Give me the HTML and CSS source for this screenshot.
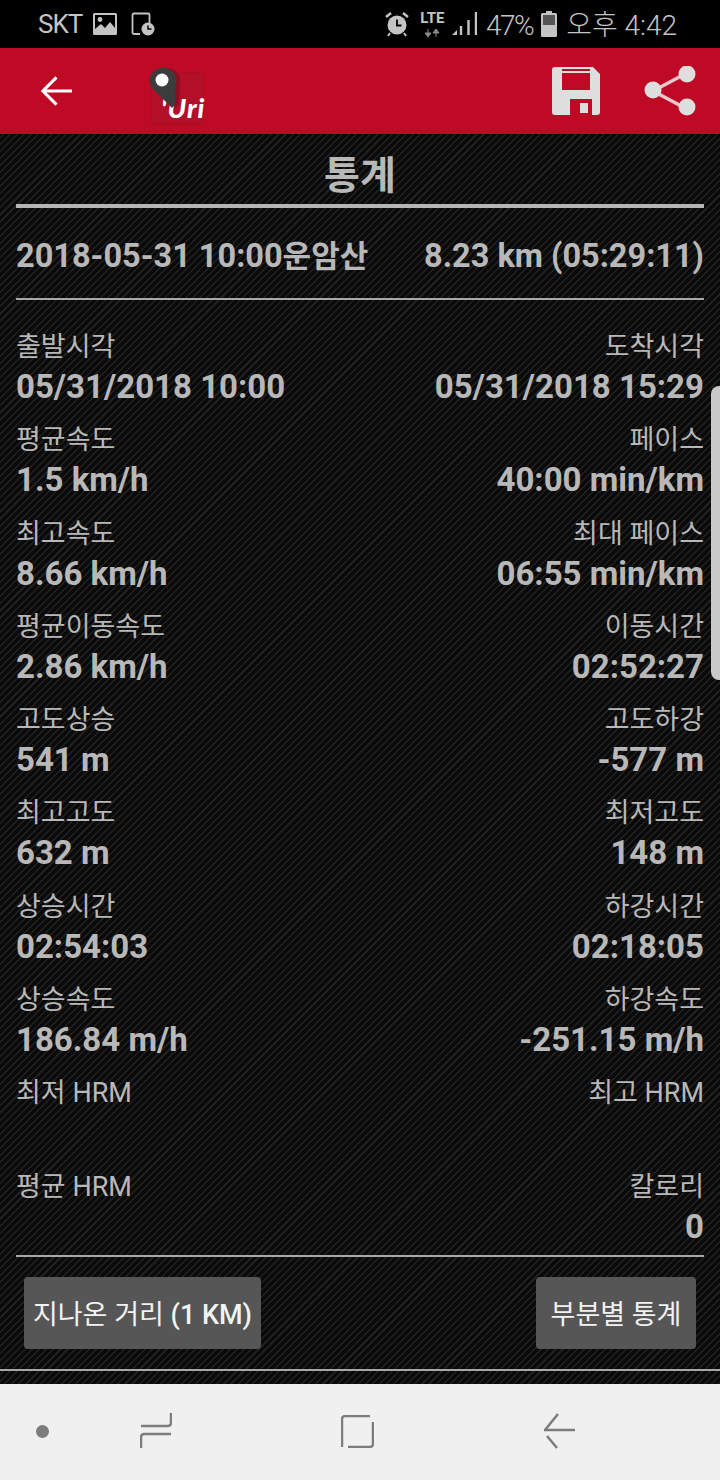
FILE: index.html
```html
<!DOCTYPE html>
<html lang="ko">
<head>
  <meta charset="UTF-8" />
  <title>통계</title>
  <link rel="stylesheet" href="styles.css">
</head>
<body>
  <div class="status-bar">
    <div class="status-left">
      <span class="st-text">SKT</span>
      <svg width="24" height="22" viewBox="0 0 24 22"><rect x="0" y="0" width="24" height="22" rx="1.500" fill="#c4c4c4"/><rect x="2" y="2" width="20" height="18" fill="#000"/><circle cx="7" cy="6.500" r="2.400" fill="#c4c4c4"/><path d="M2 20v-4l6-5 4 4 5-6 5 6v5z" fill="#c4c4c4"/></svg>
      <svg class="st-clock" width="24" height="24" viewBox="0 0 24 24"><path d="M9 22H3a1.500 1.500 0 0 1-1.500-1.500V3A1.500 1.500 0 0 1 3 1.500h14A1.500 1.500 0 0 1 18.500 3v8" fill="none" stroke="#c4c4c4" stroke-width="1.800"/><circle cx="17" cy="17" r="6.500" fill="#c4c4c4"/><path d="M17 13.500V17h3.500" fill="none" stroke="#000" stroke-width="1.500"/></svg>
    </div>
    <div class="status-right">
      <svg width="24" height="26" viewBox="0 0 24 26"><circle cx="12" cy="14" r="9.500" fill="#c4c4c4"/><path d="M12 8.500V14.500H16.500" fill="none" stroke="#000" stroke-width="1.800"/><path d="M1 6l5-4M23 6l-5-4" stroke="#c4c4c4" stroke-width="2.500"/><path d="M5 22l-2 3M19 22l2 3" stroke="#c4c4c4" stroke-width="2"/></svg>
      <div class="lte">
        <span>LTE</span>
        <svg width="16" height="8" viewBox="0 0 16 8"><path d="M4 0v4M1 4h6L4 8zM12 8V4M9 4h6l-3-4z" fill="#8a8a8a" stroke="#8a8a8a"/></svg>
      </div>
      <svg class="st-signal" width="25" height="24" viewBox="0 0 25 24"><path d="M0 23l5-5v5z" fill="#c4c4c4"/><path d="M9 23v-9M16.500 23V8M24 23V0" stroke="#c4c4c4" stroke-width="2.400" fill="none"/></svg>
      <span class="st-text st-pct">47%</span>
      <svg class="st-batt" width="16" height="26" viewBox="0 0 16 26"><path d="M5 0h6v2h3.500A1.500 1.500 0 0 1 16 3.500v21a1.500 1.500 0 0 1-1.500 1.500h-13A1.500 1.500 0 0 1 0 24.500v-21A1.500 1.500 0 0 1 1.500 2H5z" fill="#c4c4c4"/><rect x="2" y="4" width="12" height="10" fill="#555"/></svg>
      <span class="st-text st-time">오후 4:42</span>
    </div>
  </div>

  <header class="app-bar">
    <svg class="ic-back" width="32" height="32" viewBox="0 0 33 32"><path d="M33 16H3M17 2L3 16l14 14" fill="none" stroke="#fff" stroke-width="3.200"/></svg>
    <div class="logo">
      <div class="logo-box"><span class="logo-text">'Uri</span></div>
      <svg class="logo-pin" width="42" height="44" viewBox="0 0 42 44"><path d="M7 20C2 9 10 1 19 1c9 0 15 7 13 16l-1 20-3 4z" fill="#7a0a1a" opacity=".6"/><path d="M3 20C-2 9 6 1 15 1c9 0 15 7 13 16l-1 20-3 4z" fill="#3c3c3c"/><circle cx="14" cy="13" r="6.500" fill="#fff"/></svg>
    </div>
    <div class="app-actions">
      <svg width="48" height="48" viewBox="0 0 48 48"><path d="M3 0h38l7 7v38a3 3 0 0 1-3 3H3a3 3 0 0 1-3-3V3a3 3 0 0 1 3-3zM10 2v21h28V2zM18 32v16h22V32z" fill="#dedede" fill-rule="evenodd"/><path d="M10 4h28v2H10zM28 36h8v10h-8z" fill="#dedede"/></svg>
      <svg width="54" height="50" viewBox="0 0 54 50"><path d="M10 25L42 8M10 25l32 17" stroke="#e8c8cc" stroke-width="3.500"/><circle cx="10" cy="24" r="8.500" fill="#dedede"/><circle cx="44" cy="8" r="8.500" fill="#dedede"/><circle cx="44" cy="41" r="8.500" fill="#dedede"/></svg>
    </div>
  </header>

  <main class="content">
    <h1 class="title">통계</h1>
    <div class="summary">
      <span>2018-05-31 10:00<span class="place">운암산</span></span>
      <span>8.23 km (05:29:11)</span>
    </div>
    <div class="stats">
      <div class="stat"><span class="label">출발시각</span><span class="value">05/31/2018 10:00</span></div>
      <div class="stat right"><span class="label">도착시각</span><span class="value">05/31/2018 15:29</span></div>
      <div class="stat"><span class="label">평균속도</span><span class="value">1.5 km/h</span></div>
      <div class="stat right"><span class="label">페이스</span><span class="value">40:00 min/km</span></div>
      <div class="stat"><span class="label">최고속도</span><span class="value">8.66 km/h</span></div>
      <div class="stat right"><span class="label">최대 페이스</span><span class="value">06:55 min/km</span></div>
      <div class="stat"><span class="label">평균이동속도</span><span class="value">2.86 km/h</span></div>
      <div class="stat right"><span class="label">이동시간</span><span class="value">02:52:27</span></div>
      <div class="stat"><span class="label">고도상승</span><span class="value">541 m</span></div>
      <div class="stat right"><span class="label">고도하강</span><span class="value">-577 m</span></div>
      <div class="stat"><span class="label">최고고도</span><span class="value">632 m</span></div>
      <div class="stat right"><span class="label">최저고도</span><span class="value">148 m</span></div>
      <div class="stat"><span class="label">상승시간</span><span class="value">02:54:03</span></div>
      <div class="stat right"><span class="label">하강시간</span><span class="value">02:18:05</span></div>
      <div class="stat"><span class="label">상승속도</span><span class="value">186.84 m/h</span></div>
      <div class="stat right"><span class="label">하강속도</span><span class="value">-251.15 m/h</span></div>
      <div class="stat"><span class="label">최저 HRM</span><span class="value"></span></div>
      <div class="stat right"><span class="label">최고 HRM</span><span class="value"></span></div>
      <div class="stat"><span class="label">평균 HRM</span><span class="value"></span></div>
      <div class="stat right"><span class="label">칼로리</span><span class="value">0</span></div>
    </div>
    <div class="actions">
      <button class="btn btn-dist">지나온 거리 <b>(1 KM)</b></button>
      <button class="btn btn-part">부분별 통계</button>
    </div>
    <div class="scroll-thumb"></div>
  </main>

  <nav class="nav-bar">
    <span class="nav-dot"></span>
    <svg class="nav-recent" width="32" height="36" viewBox="0 0 32 36"><path d="M31 0v10a3 3 0 0 1-3 3H1M31 21H4a3 3 0 0 0-3 3v11" fill="none" stroke="#7d7d7d" stroke-width="2.500"/></svg>
    <svg class="nav-home" width="33" height="33" viewBox="0 0 33 33"><path d="M1 32V4a3 3 0 0 1 3-3h25M32 7v22a3 3 0 0 1-3 3H7" fill="none" stroke="#7d7d7d" stroke-width="2.500"/></svg>
    <svg class="nav-back" width="31" height="36" viewBox="0 0 31 36"><path d="M14 1L1 17h30M3 23l10 12" fill="none" stroke="#7d7d7d" stroke-width="2.500"/></svg>
  </nav>
</body>
</html>
```

FILE: styles.css
```css
* {
  box-sizing: border-box;
}

body {
  margin: 0;
  width: 720px;
  height: 1480px;
  overflow: hidden;
  display: flex;
  flex-direction: column;
  font-family: Roboto, "Noto Sans CJK KR", sans-serif;
  background: #000;
}

.status-bar {
  height: 48px;
  background: #000;
  color: #c4c4c4;
  display: flex;
  justify-content: space-between;
  align-items: center;
  padding: 0 43px 0 38px;
}

.status-left,
.status-right {
  display: flex;
  align-items: center;
}

.st-text {
  font-size: 28px;
  font-weight: 300;
  letter-spacing: -1.500px;
  line-height: 1;
}

.status-left .st-text {
  font-size: 26px;
  font-weight: 400;
  letter-spacing: -1px;
  margin-right: 11px;
}

.st-clock {
  margin-left: 14px;
}

.lte {
  display: flex;
  flex-direction: column;
  align-items: center;
  width: 25px;
  margin-left: 11px;
  line-height: 1;
}

.lte span {
  font-size: 15px;
  font-weight: 700;
  margin-bottom: 3px;
}

.st-signal {
  margin-left: 7px;
}

.st-pct {
  margin: 3px 0 0 9px;
}

.st-batt {
  margin-left: 8px;
}

.st-time {
  margin: 3px 0 0 9px;
  letter-spacing: 0;
}

.app-bar {
  height: 86px;
  background: #bf0a26;
  display: flex;
  align-items: center;
  padding: 0 23px 0 40px;
}

.ic-back {
  flex: none;
}

.logo {
  position: relative;
  width: 51px;
  height: 51px;
  margin: 14px 0 0 80px;
}

.logo-box {
  width: 100%;
  height: 100%;
  padding: 22px 0 0 9px;
  background: #b20f28;
  box-shadow: 0 0 1px #8a0a1c;
}

.logo-text {
  display: block;
  color: #fff;
  font-family: Lato, sans-serif;
  font-style: italic;
  font-weight: 900;
  font-size: 27px;
  letter-spacing: 1px;
  line-height: 26px;
  white-space: nowrap;
}

.logo-pin {
  position: absolute;
  left: -4px;
  top: -6px;
}

.app-actions {
  margin-left: auto;
  display: flex;
  align-items: center;
  gap: 43px;
}

.content {
  height: 1250px;
  position: relative;
  padding: 0 16px;
  color: #b8b8b8;
  background-color: #0b0b0b;
  background-image: repeating-linear-gradient(-45deg, #202020 0, #202020 1.500px, #0a0a0a 1.500px, #0a0a0a 5px);
}

.title {
  margin: 0;
  height: 74px;
  border-bottom: 4px solid #b5b5b5;
  font-size: 39px;
  font-weight: 700;
  line-height: 85px;
  text-align: center;
}

.summary {
  height: 92px;
  padding-top: 28px;
  border-bottom: 2px solid #a8a8a8;
  display: flex;
  justify-content: space-between;
  align-items: baseline;
  font-size: 32.500px;
  font-weight: 700;
  line-height: 40px;
}

.place {
  font-size: 31px;
}

.stats {
  display: grid;
  grid-template-columns: 1fr 1fr;
  padding-top: 26px;
  border-bottom: 2px solid #a8a8a8;
}

.stat {
  height: 93.300px;
  display: flex;
  flex-direction: column;
}

.stat:nth-last-child(-n+2) {
  height: 89px;
}

.stat.right {
  align-items: flex-end;
}

.label {
  font-size: 27px;
  line-height: 42px;
}

.value {
  margin-top: -1px;
  font-size: 33px;
  font-weight: 700;
  line-height: 40px;
}

.actions {
  display: flex;
  justify-content: space-between;
  padding: 20px 8px 0;
}

.btn {
  height: 72px;
  border: 0;
  border-radius: 4px;
  background: #565656;
  color: #f2f2f2;
  font-family: inherit;
  font-size: 27px;
  padding: 0;
}

.btn b {
  font-weight: 500;
}

.btn-dist {
  width: 237px;
}

.btn-part {
  width: 160px;
}

.content::after {
  content: "";
  position: absolute;
  left: 0;
  right: 0;
  top: 1235px;
  border-top: 2px solid #a8a8a8;
}

.scroll-thumb {
  position: absolute;
  right: 0;
  top: 252px;
  width: 9px;
  height: 294px;
  background: #c9c9c9;
  border-radius: 8px 0 0 8px;
}

.nav-bar {
  height: 96px;
  background: #f0f0f0;
  display: flex;
  align-items: center;
  padding-bottom: 2px;
}

.nav-dot {
  width: 13px;
  height: 13px;
  margin-left: 36px;
  border-radius: 50%;
  background: #7d7d7d;
}

.nav-recent {
  margin-left: 91px;
}

.nav-home {
  margin-left: 169px;
}

.nav-back {
  margin-left: 170px;
}
```
